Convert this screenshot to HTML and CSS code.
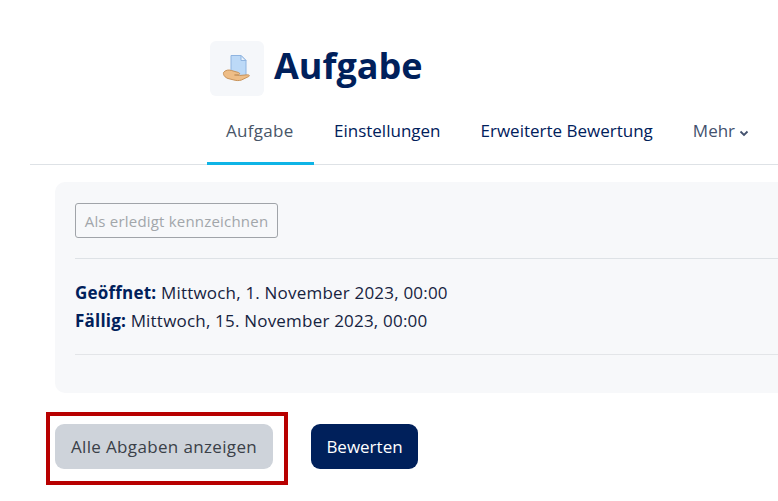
FILE: index.html
```html
<!DOCTYPE html>
<html lang="de">
<head>
<meta charset="UTF-8">
<title>Aufgabe</title>
<link rel="stylesheet" href="styles.css">
</head>
<body>

<div class="page-header">
  <div class="activity-icon">
    <svg width="30" height="30" viewBox="0 0 30 30">
      <path d="M9 1.500h10l5 5v16H9z" fill="#bcd9f7" stroke="#8fb4e0"/>
      <path d="M19 1.500l5 5h-5z" fill="#e8f2fc" stroke="#8fb4e0"/>
      <path d="M1.500 18.500c2-2.500 5-3 8-2l7 2c1.500.5 1.500 2 0 2.200l-4 .3 5 .5 8-.7c2 0 2.500 1.200 1 1.800l-7 3.400c-2.500.8-5 .7-7.500 0l-6-1.500c-3-1-5-3.500-4.500-6z" fill="#eebd86" stroke="#c8935a"/>
    </svg>
  </div>
  <h1>Aufgabe</h1>
</div>

<nav class="tabs">
  <a class="tab active">Aufgabe</a>
  <a class="tab">Einstellungen</a>
  <a class="tab">Erweiterte Bewertung</a>
  <a class="tab more">Mehr
    <svg width="10" height="7" viewBox="0 0 10 7"><path d="M1.500 1.500L5 5l3.500-3.500" fill="none" stroke="#43516e" stroke-width="1.800"/></svg>
  </a>
</nav>

<div class="card">
  <button class="btn-outline">Als erledigt kennzeichnen</button>
  <hr class="first-rule">
  <div class="dates">
    <div><strong>Geöffnet:</strong> Mittwoch, 1. November 2023, 00:00</div>
    <div><strong>Fällig:</strong> Mittwoch, 15. November 2023, 00:00</div>
  </div>
  <hr class="second-rule">
</div>

<div class="actions">
  <div class="highlight">
    <button class="btn btn-grey">Alle Abgaben anzeigen</button>
  </div>
  <button class="btn btn-navy">Bewerten</button>
</div>

</body>
</html>
```

FILE: styles.css
```css
* {
  box-sizing: border-box;
}

body {
  margin: 0;
  width: 778px;
  height: 501px;
  overflow: hidden;
  background-color: #fff;
  color: #1d2125;
  font-family: "Open Sans", "Noto Sans", sans-serif;
  font-size: 17px;
}

/* Kopfbereich */
.page-header {
  display: flex;
  align-items: center;
  gap: 10px;
  padding: 41px 0 0 210px;
}

.activity-icon {
  width: 54px;
  height: 55px;
  display: flex;
  align-items: center;
  justify-content: center;
  background-color: #f5f7fa;
  border-radius: 6px;
}

h1 {
  margin: -6px 0 0;
  font-size: 36px;
  font-weight: 700;
  color: #00205b;
  line-height: 50px;
}

/* Tabs */
.tabs {
  display: flex;
  margin: 15px 0 0 30px;
  padding-left: 177px;
  height: 54px;
  border-bottom: 1px solid #dee2e6;
  white-space: nowrap;
}

.tab {
  height: 54px;
  padding: 8px 20px 0;
  color: #00205b;
}

.tab.active {
  width: 107px;
  padding: 8px 0 0 19px;
  color: #495668;
  border-bottom: 3px solid #0fb4e6;
  letter-spacing: 0.3px;
}

.tab.more {
  color: #43516e;
}

/* Karte */
.card {
  width: 760px;
  height: 211px;
  margin: 17px 0 0 55px;
  padding: 21px 0 0 20px;
  background-color: #f7f8fa;
  border-radius: 10px;
}

.btn-outline {
  display: block;
  width: 203px;
  height: 35px;
  padding: 0;
  background: transparent;
  border: 1px solid #a0a4a9;
  border-radius: 3px;
  color: #a2a6aa;
  font-family: inherit;
  font-size: 15px;
  letter-spacing: 0.2px;
}

hr {
  margin: 0;
  border: 0;
  border-top: 1px solid #dee2e6;
}

.first-rule {
  margin-top: 20px;
}

.dates {
  margin-top: 20px;
  line-height: 28px;
  letter-spacing: 0.2px;
  color: #16233f;
}

.dates strong {
  color: #00205b;
}

.second-rule {
  margin-top: 19px;
  border-color: #e3e5e8;
}

/* Schaltflächen unten */
.actions {
  display: flex;
  align-items: flex-start;
  gap: 23px;
  margin: 19px 0 0 46px;
}

.highlight {
  width: 242px;
  height: 73px;
  padding: 8px 0 0 5px;
  border: 4px solid #b80000;
}

.btn {
  height: 45px;
  padding: 0;
  border: 0;
  border-radius: 9px;
  font-family: inherit;
  font-size: 17px;
}

.btn-grey {
  width: 218px;
  background-color: #ced3da;
  color: #3a4048;
  letter-spacing: 0.35px;
}

.btn-navy {
  width: 107px;
  margin-top: 12px;
  background-color: #00205b;
  color: #fff;
}
```
